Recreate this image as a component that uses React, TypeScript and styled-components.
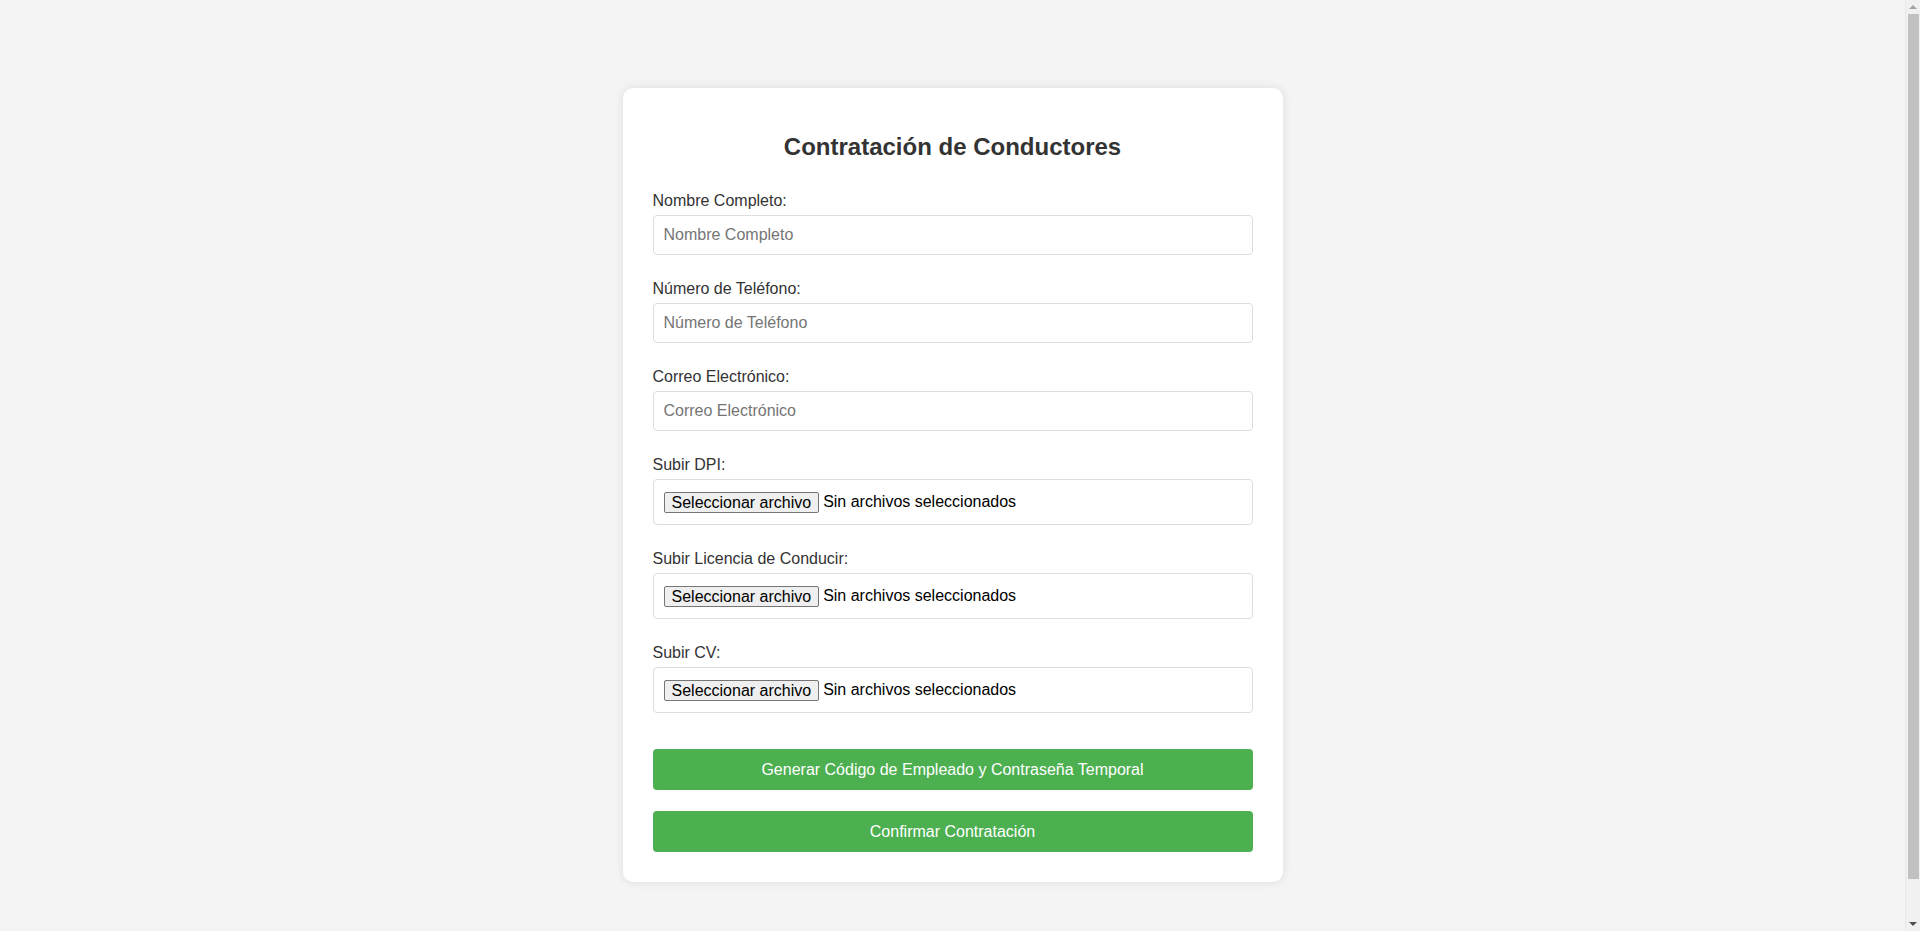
import React from "react";
import styled, { createGlobalStyle } from "styled-components";

const GlobalStyle = createGlobalStyle`
  html, body {
    margin: 0;
    padding: 0;
    background: #f4f4f4;
    font-family: "Liberation Sans", Arial, sans-serif;
  }
  * { box-sizing: border-box; }
`;

const Page = styled.div`
  padding: 88px 15px 88px 0;
`;

const Card = styled.main`
  width: 660px;
  margin: 0 auto;
  padding: 30px;
  background: #ffffff;
  border-radius: 10px;
  box-shadow: 0 0 10px rgba(0, 0, 0, 0.1);
`;

const Title = styled.h2`
  margin: 15px 0 31px;
  font-size: 24px;
  font-weight: bold;
  color: #333333;
  text-align: center;
`;

const Form = styled.form`
  display: flex;
  flex-direction: column;
`;

const Field = styled.div`
  margin-bottom: 25px;
`;

const Label = styled.label`
  display: block;
  margin-bottom: 5px;
  font-size: 16px;
  color: #333333;
`;

const TextInput = styled.input`
  display: block;
  width: 100%;
  height: 40px;
  padding: 10px;
  border: 1px solid #dddddd;
  border-radius: 4px;
  font-family: "Liberation Sans", Arial, sans-serif;
  font-size: 16px;
  color: #000;
  background: #fff;
  outline: none;
  &::placeholder {
    color: #757575;
  }
`;

const FileBox = styled.label`
  display: flex;
  align-items: center;
  width: 100%;
  height: 46px;
  padding: 10px;
  border: 1px solid #dddddd;
  border-radius: 4px;
  font-size: 16px;
  color: #000000;
  cursor: pointer;
`;

const HiddenFile = styled.input`
  display: none;
`;

const FileButton = styled.span`
  display: inline-block;
  height: 21px;
  padding: 0 7px;
  margin-right: 4px;
  line-height: 19px;
  border: 1px solid #767676;
  border-radius: 2px;
  background: #efefef;
  color: #000000;
  font-size: 16px;
`;

const FileText = styled.span`
  font-size: 16px;
  color: #000000;
`;

const ActionButton = styled.button<{ $first?: boolean }>`
  display: block;
  width: 100%;
  height: 41px;
  margin-top: ${(p) => (p.$first ? "11px" : "21px")};
  padding: 0 10px;
  border: none;
  border-radius: 4px;
  background: #4caf50;
  color: #ffffff;
  font-family: "Liberation Sans", Arial, sans-serif;
  font-size: 16px;
  cursor: pointer;
`;

/* Drawing of the browser's classic vertical scrollbar, overlaying the right edge */
const ScrollTrack = styled.div`
  position: fixed;
  top: 0;
  right: 0;
  bottom: 0;
  width: 15px;
  display: flex;
  flex-direction: column;
  align-items: center;
  background: #f1f1f1;
  border-left: 1px solid #e8e8e8;
`;

const ScrollArrow = styled.div<{ $down?: boolean; $active?: boolean }>`
  flex: 0 0 14px;
  width: 100%;
  display: flex;
  align-items: center;
  justify-content: center;
  &::before {
    content: "";
    width: 0;
    height: 0;
    border-left: 4px solid transparent;
    border-right: 4px solid transparent;
    ${(p) =>
      p.$down
        ? `border-top: 4px solid ${p.$active ? "#505050" : "#a3a3a3"};`
        : `border-bottom: 4px solid ${p.$active ? "#505050" : "#a3a3a3"};`}
  }
`;

const ScrollThumb = styled.div`
  flex: 0 0 865px;
  width: 11px;
  margin-left: 1px;
  background: #c1c1c1;
`;

const ScrollSpacer = styled.div`
  flex: 1 1 auto;
`;

const textFields = [
  { id: "nombre", label: "Nombre Completo:", placeholder: "Nombre Completo", type: "text" },
  { id: "telefono", label: "Número de Teléfono:", placeholder: "Número de Teléfono", type: "tel" },
  { id: "correo", label: "Correo Electrónico:", placeholder: "Correo Electrónico", type: "email" },
];

const fileFields = [
  { id: "dpi", label: "Subir DPI:" },
  { id: "licencia", label: "Subir Licencia de Conducir:" },
  { id: "cv", label: "Subir CV:" },
];

function FileField({ id, label }: { id: string; label: string }) {
  const [name, setName] = React.useState<string>("");
  return (
    <Field>
      <Label htmlFor={id}>{label}</Label>
      <FileBox htmlFor={id}>
        <HiddenFile
          id={id}
          type="file"
          onChange={(e) => setName(e.target.files?.[0]?.name ?? "")}
        />
        <FileButton>Seleccionar archivo</FileButton>
        <FileText>{name || "Sin archivos seleccionados"}</FileText>
      </FileBox>
    </Field>
  );
}

export default function App() {
  return (
    <>
      <GlobalStyle />
      <Page>
        <Card>
          <Title>Contratación de Conductores</Title>
          <Form onSubmit={(e) => e.preventDefault()}>
            {textFields.map((f) => (
              <Field key={f.id}>
                <Label htmlFor={f.id}>{f.label}</Label>
                <TextInput id={f.id} type={f.type} placeholder={f.placeholder} />
              </Field>
            ))}
            {fileFields.map((f) => (
              <FileField key={f.id} id={f.id} label={f.label} />
            ))}
          </Form>
          <ActionButton type="button" $first>
            Generar Código de Empleado y Contraseña Temporal
          </ActionButton>
          <ActionButton type="button">Confirmar Contratación</ActionButton>
        </Card>
      </Page>
      <ScrollTrack aria-hidden>
        <ScrollArrow />
        <ScrollThumb />
        <ScrollSpacer />
        <ScrollArrow $down $active />
      </ScrollTrack>
    </>
  );
}
